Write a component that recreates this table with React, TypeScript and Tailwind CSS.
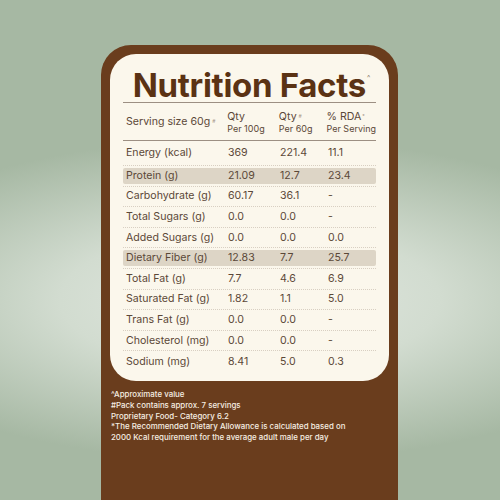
const rows: { name: string; a: string; b: string; c: string; hl?: boolean }[] = [
  { name: "Energy (kcal)", a: "369", b: "221.4", c: "11.1" },
  { name: "Protein (g)", a: "21.09", b: "12.7", c: "23.4", hl: true },
  { name: "Carbohydrate (g)", a: "60.17", b: "36.1", c: "-" },
  { name: "Total Sugars (g)", a: "0.0", b: "0.0", c: "-" },
  { name: "Added Sugars (g)", a: "0.0", b: "0.0", c: "0.0" },
  { name: "Dietary Fiber (g)", a: "12.83", b: "7.7", c: "25.7", hl: true },
  { name: "Total Fat (g)", a: "7.7", b: "4.6", c: "6.9" },
  { name: "Saturated Fat (g)", a: "1.82", b: "1.1", c: "5.0" },
  { name: "Trans Fat (g)", a: "0.0", b: "0.0", c: "-" },
  { name: "Cholesterol (mg)", a: "0.0", b: "0.0", c: "-" },
  { name: "Sodium (mg)", a: "8.41", b: "5.0", c: "0.3" },
];

const notes = [
  "^Approximate value",
  "#Pack contains approx. 7 servings",
  "Proprietary Food- Category 6.2",
  "*The Recommended Dietary Allowance is calculated based on",
  "2000 Kcal requirement for the average adult male per day",
];

function Row({ row, first, last }: { row: (typeof rows)[number]; first: boolean; last: boolean }) {
  return (
    <div
      className={`flex flex-col justify-center py-[2px] ${first ? "h-[25px] pb-[2px]" : "h-[20.6px]"} ${
        last ? "" : "border-b border-dotted border-[#d8cfc2]"
      }`}
    >
      <div className={`flex h-full items-center rounded-[2px] ${row.hl ? "bg-[#ddd5c6]" : ""}`}>
        <span className="w-[105px] pl-[3px]">{row.name}</span>
        <span className="w-[52px]">{row.a}</span>
        <span className="w-[48px]">{row.b}</span>
        <span>{row.c}</span>
      </div>
    </div>
  );
}

export default function App() {
  return (
    <div className="flex h-[500px] w-[500px] justify-center overflow-hidden bg-[radial-gradient(ellipse_95%_36%_at_50%_60%,#e2e8e1_0%,#d2dcd0_40%,#a6b8a3_90%)] pt-[45px] font-['Inter',sans-serif]">
      <div className="ml-[-1px] flex h-[480px] w-[297px] flex-col rounded-t-[30px] bg-[#6a3d1d] px-[9px] pt-[9px]">
        <div className="flex h-[327px] flex-col rounded-[26px] bg-[#fbf7ec] px-[13px] pt-[14px] text-[10.6px] text-[#5b4838]">
          <div className="flex justify-center pl-[4px]">
            <h1 className="text-[33px] leading-[34px] font-bold tracking-[-0.3px] text-[#5a3214]">Nutrition Facts</h1>
            <span className="mt-[5px] ml-[1px] text-[7px] text-[#8a7a6a]">^</span>
          </div>
          <div className="border-t border-[#9c8f83]" />
          <div className="flex h-[38px] items-start border-b border-[#9c8f83] pt-[8px]">
            <span className="mt-[3px] w-[105px] pl-[3px] text-[10.6px]">
              Serving size 60g<sup className="ml-[2px] text-[5px] text-[#a09080]">#</sup>
            </span>
            <div className="flex w-[52px] flex-col leading-[12px]">
              <span>Qty</span>
              <span className="text-[9px]">Per 100g</span>
            </div>
            <div className="flex w-[48px] flex-col leading-[12px]">
              <span>
                Qty<sup className="ml-[2px] text-[5px] text-[#a09080]">#</sup>
              </span>
              <span className="text-[9px]">Per 60g</span>
            </div>
            <div className="flex flex-1 flex-col leading-[12px] whitespace-nowrap">
              <span>
                % RDA<sup className="ml-[1px] text-[5px] text-[#a09080]">*</sup>
              </span>
              <span className="text-[9px]">Per Serving</span>
            </div>
          </div>
          {rows.map((r, i) => (
            <Row key={r.name} row={r} first={i === 0} last={i === rows.length - 1} />
          ))}
        </div>
        <div className="mt-[8px] pl-[1px] text-[7.9px] leading-[10.75px] font-medium text-[#f6eee2]">
          {notes.map((n) => (
            <p key={n}>{n}</p>
          ))}
        </div>
      </div>
    </div>
  );
}
